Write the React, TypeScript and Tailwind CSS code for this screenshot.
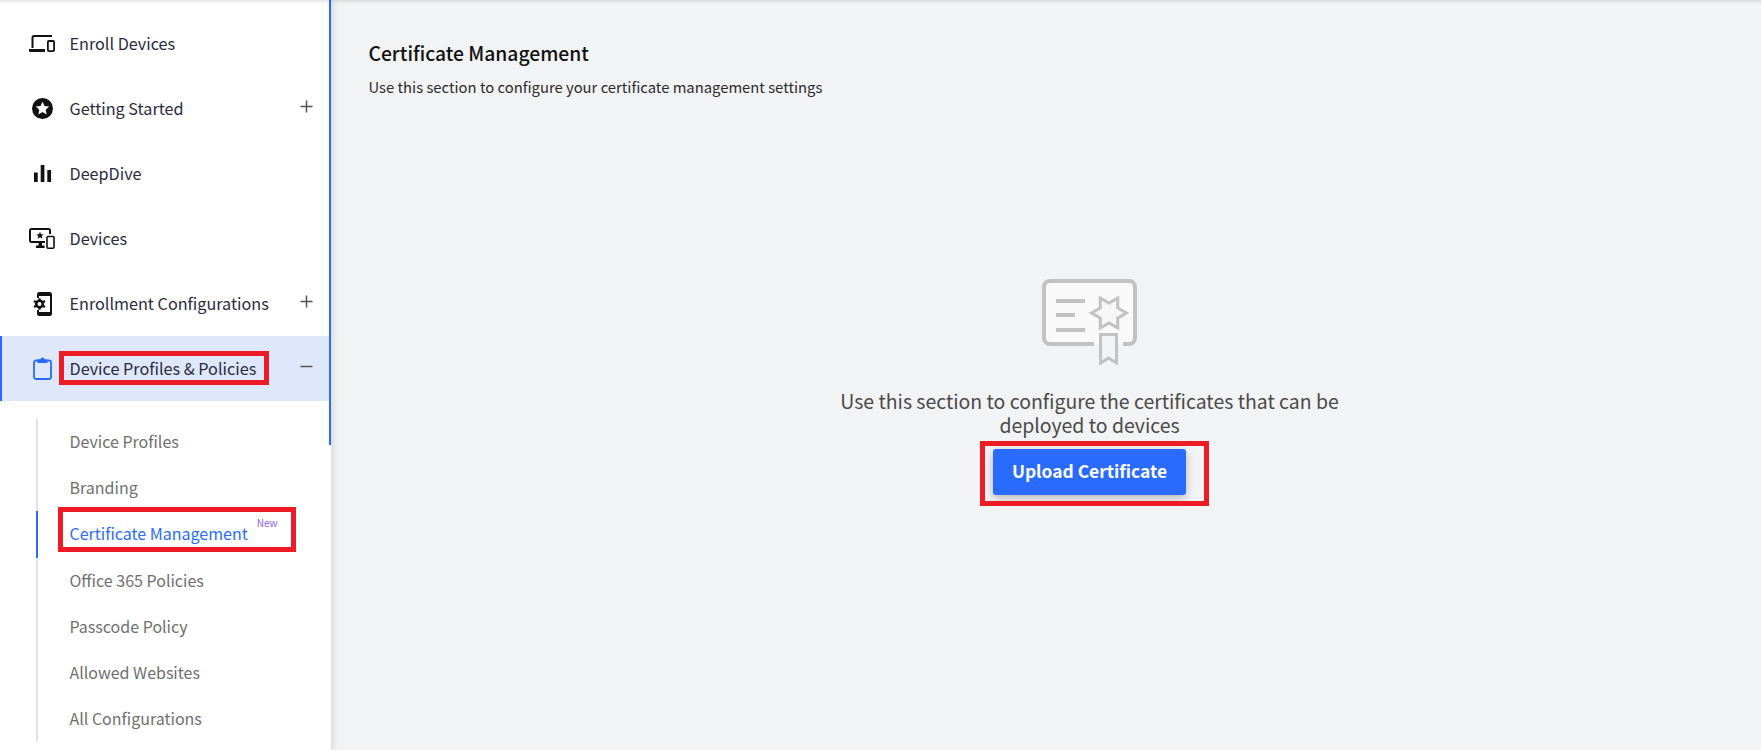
const font = "font-['Noto_Sans_CJK_JP','Noto_Sans',sans-serif]";

function EnrollIcon() {
  return (
    <svg width="26" height="17" viewBox="0 0 26 17" fill="none">
      <path d="M3.500 13V2.500A1.500 1.500 0 0 1 5 1h18" stroke="#111" strokeWidth="2" />
      <path d="M0 14h16v3H1.500A1.500 1.500 0 0 1 0 15.500z" fill="#111" />
      <rect x="18.900" y="6" width="6.200" height="10.100" rx="1" stroke="#111" strokeWidth="1.800" />
    </svg>
  );
}

function StarCircleIcon() {
  return (
    <svg width="21" height="21" viewBox="0 0 21 21">
      <circle cx="10.500" cy="10.500" r="10.500" fill="#111" />
      <path d="M10.500 3.800l2 4.300 4.700.5-3.500 3.200 1 4.600-4.200-2.400-4.200 2.400 1-4.600-3.500-3.200 4.700-.5z" fill="#fff" />
    </svg>
  );
}

function BarsIcon() {
  return (
    <svg width="17" height="17" viewBox="0 0 17 17" fill="#111">
      <rect x="0" y="7.500" width="3.700" height="9.500" />
      <rect x="6.700" y="0" width="3.700" height="17" />
      <rect x="13.300" y="5" width="3.700" height="12" />
    </svg>
  );
}

function DevicesIcon() {
  return (
    <svg width="26" height="21" viewBox="0 0 26 21" fill="none">
      <path d="M16 14H2.500A1.500 1.500 0 0 1 1 12.500V2.500A1.500 1.500 0 0 1 2.500 1h17A1.500 1.500 0 0 1 21 2.500V6" stroke="#111" strokeWidth="2" />
      <path d="M11 3.800l1.100 2.400 2.600.2-2 1.700.6 2.600-2.300-1.400-2.300 1.400.6-2.600-2-1.700 2.600-.2z" fill="#111" />
      <path d="M9.500 15h3.500v2.500h2.500V20h-8.500v-2.500h2.500z" fill="#111" />
      <rect x="18" y="8.500" width="7" height="11.700" rx="1" stroke="#111" strokeWidth="1.600" />
    </svg>
  );
}

function PhoneGearIcon() {
  return (
    <svg width="19" height="24" viewBox="0 0 19 24" fill="none">
      <path d="M5 6V2.500A1.500 1.500 0 0 1 6.500 1h10A1.500 1.500 0 0 1 18 2.500v19a1.500 1.500 0 0 1-1.500 1.500h-10A1.500 1.500 0 0 1 5 21.500V18" stroke="#111" strokeWidth="2" />
      <rect x="5" y="1" width="12" height="3" fill="#111" />
      <rect x="5" y="20" width="12" height="3" fill="#111" />
      <circle cx="6.500" cy="12" r="3.300" stroke="#111" strokeWidth="2.600" fill="#fff" />
      <path d="M6.500 6.300v2M6.500 15.700v2M1 9l1.700 1M10.300 14l1.700 1M1 15l1.700-1M10.300 10l1.700-1" stroke="#111" strokeWidth="2.200" />
    </svg>
  );
}

function ClipboardIcon() {
  return (
    <svg width="19" height="23" viewBox="0 0 19 23" fill="none">
      <rect x="1" y="3.500" width="17" height="18.500" rx="2" stroke="#2a6bff" strokeWidth="1.800" />
      <path d="M4.500 2.500h3a2 2 0 0 1 4 0h3v3.500h-10z" fill="#2a6bff" />
    </svg>
  );
}

function PlusIcon() {
  return (
    <svg width="13" height="13" viewBox="0 0 13 13" stroke="#555" strokeWidth="1.500">
      <path d="M0.500 6.500h12M6.500 0.500v12" />
    </svg>
  );
}

function MinusIcon() {
  return (
    <svg width="13" height="13" viewBox="0 0 13 13" stroke="#555" strokeWidth="1.500">
      <path d="M0.500 6.500h12" />
    </svg>
  );
}

function CertificateIcon() {
  return (
    <svg width="95" height="86" viewBox="0 0 95 86" fill="none" stroke="#c2c2c2">
      <rect x="2" y="2" width="91" height="63" rx="6" fill="#f9f9fa" stroke="none" />
      <path d="M52 65H8a6 6 0 0 1-6-6V8a6 6 0 0 1 6-6h79a6 6 0 0 1 6 6v51a6 6 0 0 1-6 6h-6" strokeWidth="4" />
      <path d="M14 22h29M14 36h19M14 51h29" strokeWidth="4" />
      <path d="M84.500 34L75.700 39L75.750 49L67 44L58.250 49L58.300 39L49.500 34L58.300 29L58.250 19L67 24L75.750 19L75.700 29z" fill="#f6f6f7" strokeWidth="3" />
      <path d="M58.500 55.500h16v28.500l-8-5-8 5z" fill="#f2f3f5" strokeWidth="3" />
    </svg>
  );
}

function Row({ icon, label, toggle, active }: { icon: React.ReactNode; label: string; toggle?: React.ReactNode; active?: boolean }) {
  return (
    <div className={`flex h-[65px] items-center border-l-2 pl-[27px] pr-[18.500px] ${active ? "border-[#2a6bff] bg-[#dfe7fb]" : "border-transparent"}`}>
      <div className="flex w-[26px] shrink-0 justify-center">{icon}</div>
      <span className="ml-[14.500px] flex-1 pb-[2px] text-[16.200px] leading-[24px] text-[#2b2b40]">{label}</span>
      {toggle && <span className="flex pb-[4px]">{toggle}</span>}
    </div>
  );
}

const subItems = ["Device Profiles", "Branding", "Certificate Management", "Office 365 Policies", "Passcode Policy", "Allowed Websites", "All Configurations"];

function SubItem({ label }: { label: string }) {
  const active = label === "Certificate Management";
  return (
    <div className={`flex h-[46.200px] items-center border-l-2 pl-[31.500px] text-[16px] ${active ? "border-[#2a6bff] text-[#2a6bff]" : "border-[#e2e2e2] text-[#6f6f6f]"}`}>
      <span className="pb-[2px]">{label}</span>
      {active && <span className="relative -top-[11px] ml-[9px] text-[10px] leading-[12px] text-[#8b5cf6]">New</span>}
    </div>
  );
}

export default function App() {
  return (
    <div className={`relative flex h-[750px] w-[1761px] overflow-hidden bg-[#f2f3f5] ${font}`}>
      <aside className="relative h-full w-[331px] shrink-0 bg-white pt-[11px] shadow-[2px_0_6px_rgba(0,0,0,0.12)]">
        <div className="absolute right-0 top-0 h-[445px] w-[2px] bg-[#2a6bff]" />
        <Row icon={<EnrollIcon />} label="Enroll Devices" />
        <Row icon={<StarCircleIcon />} label="Getting Started" toggle={<PlusIcon />} />
        <Row icon={<BarsIcon />} label="DeepDive" />
        <Row icon={<DevicesIcon />} label="Devices" />
        <Row icon={<PhoneGearIcon />} label="Enrollment Configurations" toggle={<PlusIcon />} />
        <Row icon={<ClipboardIcon />} label="Device Profiles & Policies" toggle={<MinusIcon />} active />
        <div className="ml-[36px] mt-[18px]">
          {subItems.map((s) => (
            <SubItem key={s} label={s} />
          ))}
        </div>
      </aside>

      <main className="flex-1">
        <div className="pl-[37.500px] pt-[40px]">
          <h1 className="text-[19.300px] font-medium leading-[27px] text-[#111]">Certificate Management</h1>
          <p className="mt-[9px] text-[14.800px] leading-[21px] text-[#2b2b2b]">Use this section to configure your certificate management settings</p>
        </div>
        <div className="mt-[182px] flex flex-col items-center pl-[87px]">
          <CertificateIcon />
          <p className="mt-[24px] w-[540px] text-center text-[19.450px] leading-[24px] text-[#4a4a4a]">Use this section to configure the certificates that can be deployed to devices</p>
          <button className="mt-[12px] h-[46px] w-[193px] rounded-[3px] bg-[#2a6bff] pb-[2px] text-[17.400px] font-bold text-white shadow-[0_3px_8px_rgba(0,0,0,0.25)]">Upload Certificate</button>
        </div>
      </main>

      <div className="absolute left-0 right-0 top-0 h-[4px] bg-gradient-to-b from-black/10 to-transparent" />
      <div className="absolute left-[59px] top-[351px] h-[34px] w-[210px] border-[5px] border-[#ed1c24]" />
      <div className="absolute left-[58px] top-[507px] h-[45px] w-[238px] border-[5px] border-[#ed1c24]" />
      <div className="absolute left-[980px] top-[441px] h-[65px] w-[229px] border-[5px] border-[#ed1c24]" />
    </div>
  );
}
